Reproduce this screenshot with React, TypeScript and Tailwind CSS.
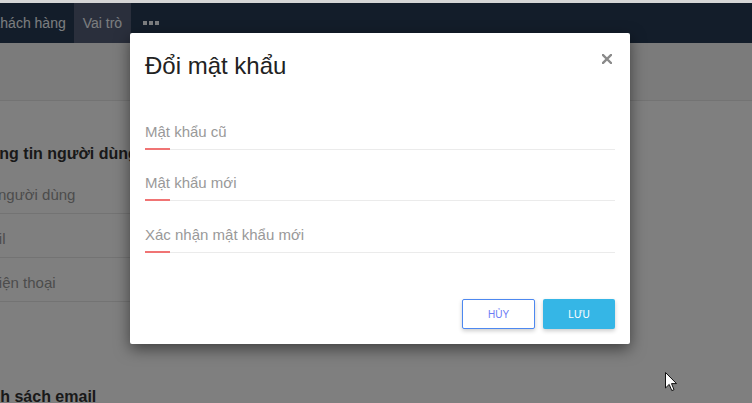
import React from 'react';

const fields = ['Mật khẩu cũ', 'Mật khẩu mới', 'Xác nhận mật khẩu mới'];

function UnderlineField({ label }: { label: string }) {
  return (
    <div>
      <div className="h-[20px] text-[15px] leading-[20px] text-[#999]">{label}</div>
      <div className="mt-[6px] flex h-[2px] items-center">
        <div className="h-[2px] w-[25px] bg-[#f07474]" />
        <div className="h-px flex-1 bg-[#ebebeb]" />
      </div>
    </div>
  );
}

export default function App() {
  return (
    <div
      className="relative h-[403px] w-[752px] overflow-hidden bg-white"
      style={{ fontFamily: '"Liberation Sans", Arial, sans-serif' }}
    >
      <div className="h-[3px] bg-[#d6d6d6]" />

      {/* navbar */}
      <div className="flex h-[40px] items-stretch bg-[#263a54] text-[14px] text-[#f6fbff]">
        <div className="ml-[-18px] flex items-center pl-[9px] pr-[8px]">Khách hàng</div>
        <div className="flex items-center bg-[#545e78] px-[9px]">Vai trò</div>
        <div className="flex items-center gap-[2px] px-[12px]">
          <span className="h-[4px] w-[4px] bg-[#f6fbff]" />
          <span className="h-[4px] w-[4px] bg-[#f6fbff]" />
          <span className="h-[4px] w-[4px] bg-[#f6fbff]" />
        </div>
      </div>

      {/* page header */}
      <div className="h-[58px] border-b border-[#e6e6e6] bg-[#f6f6f6]" />

      {/* page body */}
      <div className="ml-[-30px] w-[400px] pt-[41px]">
        <div className="h-[24px] text-[16px] font-bold leading-[24px] text-[#333]">
          Thông tin người dùng
        </div>
        <div className="mt-[4px]">
          {['Tên người dùng', 'Email', 'Số điện thoại'].map((t) => (
            <div
              key={t}
              className="flex h-[44px] items-center border-b border-[#e6e6e6] pt-[8px] text-[15px] text-[#999]"
            >
              <span className="ml-[-2px]">{t}</span>
            </div>
          ))}
        </div>
        <div className="mt-[83px] h-[24px] text-[16px] font-bold leading-[24px] text-[#333]">
          Danh sách email
        </div>
      </div>

      {/* overlay + modal */}
      <div className="absolute inset-x-0 bottom-0 top-[3px] bg-black/50">
        <div className="ml-[130px] mt-[30px] w-[500px] rounded-[2px] bg-white shadow-[0_5px_15px_rgba(0,0,0,0.5)]">
          <div className="flex items-start justify-between px-[15px] pt-[15px]">
            <h4 className="text-[24px] leading-[36px] text-[#222]">Đổi mật khẩu</h4>
            <button className="mr-[3px] mt-[6px] p-0">
              <svg width="10" height="10" viewBox="0 0 10 10">
                <path d="M1 1 L9 9 M9 1 L1 9" stroke="#8a8a8a" strokeWidth="2.4" strokeLinecap="square" />
              </svg>
            </button>
          </div>
          <div className="flex flex-col px-[15px] pt-[38px]">
            <UnderlineField label={fields[0]} />
            <div className="mt-[23px]">
              <UnderlineField label={fields[1]} />
            </div>
            <div className="mt-[24px]">
              <UnderlineField label={fields[2]} />
            </div>
          </div>
          <div className="flex justify-end gap-[8px] px-[15px] pb-[15px] pt-[46px]">
            <button className="h-[30px] w-[73px] rounded-[2px] border border-[#4d88f0] bg-white text-[10px] text-[#6b7cf5] shadow-[0_2px_4px_rgba(0,0,0,0.2)]">
              HỦY
            </button>
            <button className="h-[30px] w-[72px] rounded-[2px] bg-[#35b6e6] text-[10px] text-white shadow-[0_2px_4px_rgba(0,0,0,0.2)]">
              LƯU
            </button>
          </div>
        </div>
      </div>

      {/* mouse pointer */}
      <svg className="absolute left-[665px] top-[372px]" width="13" height="21" viewBox="0 0 13 21">
        <path
          d="M0.5 0.5 L0.5 16 L4.2 12.4 L6.8 18.6 L9 17.7 L6.5 11.6 L11.5 11.6 Z"
          fill="white"
          stroke="#111"
          strokeWidth="1"
          strokeLinejoin="round"
        />
      </svg>
    </div>
  );
}
